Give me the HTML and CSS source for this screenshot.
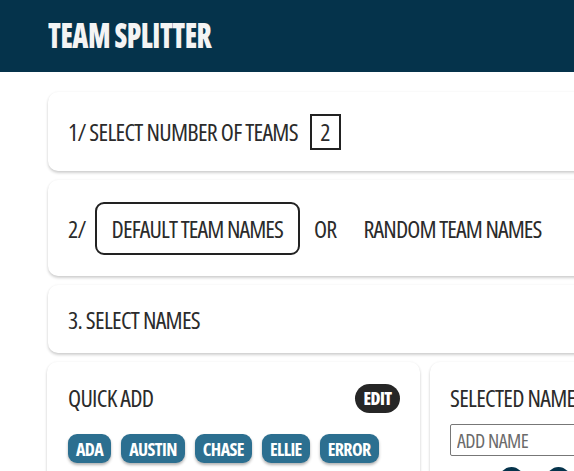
FILE: index.html
```html
<!DOCTYPE html>
<html>
<head>
<meta charset="utf-8">
<link rel="stylesheet" href="styles.css">
</head>
<body>
<header class="topbar">
  <h1 class="brand">TEAM SPLITTER</h1>
</header>
<main class="main">
  <section class="card step step-one">
    <span class="label">1/ SELECT NUMBER OF TEAMS</span>
    <span class="count-box">2</span>
  </section>
  <section class="card step step-two">
    <span class="label">2/</span>
    <button class="option selected">DEFAULT TEAM NAMES</button>
    <span class="label or">OR</span>
    <button class="option">RANDOM TEAM NAMES</button>
  </section>
  <section class="card step step-three">
    <span class="label">3. SELECT NAMES</span>
  </section>
  <div class="columns">
    <section class="card panel quick">
      <div class="panel-head">
        <h2 class="panel-title">QUICK ADD</h2>
        <button class="edit">EDIT</button>
      </div>
      <div class="chips">
        <span class="chip">ADA</span>
        <span class="chip">AUSTIN</span>
        <span class="chip">CHASE</span>
        <span class="chip">ELLIE</span>
        <span class="chip">ERROR</span>
      </div>
    </section>
    <section class="card panel selected-panel">
      <h2 class="panel-title">SELECTED NAMES</h2>
      <input class="name-input" type="text" placeholder="ADD NAME">
      <div class="dots">
        <span class="dot"></span>
        <span class="dot"></span>
      </div>
    </section>
  </div>
</main>
</body>
</html>
```
FILE: styles.css
```css
html, body {
  margin: 0;
  padding: 0;
  overflow: hidden;
  background: #ffffff;
}
body {
  font-family: "Open Sans", "DejaVu Sans", sans-serif;
  font-stretch: 75%;
  color: #2b2b2b;
  width: 800px;
}
.topbar {
  background: #05334b;
  height: 72px;
  display: flex;
  align-items: center;
  padding-left: 48px;
}
.brand {
  margin: 0;
  color: #f4f4f4;
  font-size: 35px;
  font-weight: 800;
  letter-spacing: -0.6px;
  line-height: 1;
  padding-bottom: 3px;
  transform: scaleX(0.8);
  transform-origin: left center;
}
.main {
  padding: 20px 0 0 48px;
  display: flex;
  flex-direction: column;
  gap: 9px;
}
.card {
  background: #fff;
  border-radius: 10px;
  box-shadow: 0 2px 3px rgba(0,0,0,0.18), 0 0 3px rgba(0,0,0,0.05);
}
.step {
  display: flex;
  align-items: center;
  padding: 0 20px;
}
.label {
  font-size: 24px;
  font-weight: 500;
  letter-spacing: -0.7px;
  color: #2b2b2b;
  white-space: nowrap;
}
.step-one {
  height: 79px;
}
.count-box {
  margin-left: 12px;
  width: 27px;
  height: 32px;
  border: 2px solid #222;
  display: flex;
  align-items: center;
  justify-content: center;
  font-size: 24px;
  font-weight: 500;
}
.step-two {
  height: 96px;
}
.option {
  font-family: inherit;
  font-stretch: 75%;
  font-size: 24px;
  font-weight: 500;
  letter-spacing: -0.9px;
  color: #2b2b2b;
  background: #fff;
  border: 2px solid transparent;
  border-radius: 9px;
  height: 53px;
  padding: 0 15px;
  margin-left: 9px;
  white-space: nowrap;
}
.option.selected {
  border-color: #222;
}
.or {
  margin-left: 14px;
}
.option + .or + .option {
  margin-left: 10px;
}
.step-three {
  height: 68px;
}
.columns {
  display: flex;
  gap: 10px;
  margin-left: -1px;
}
.panel {
  padding: 20px 20px 20px 21px;
}
.quick {
  width: 332px;
  flex: none;
}
.selected-panel {
  flex: 1;
  padding-left: 20px;
}
.panel-head {
  display: flex;
  align-items: center;
  justify-content: space-between;
}
.panel-title {
  margin: 0;
  font-size: 24px;
  font-weight: 500;
  letter-spacing: -0.7px;
  line-height: 32px;
  color: #2b2b2b;
  white-space: nowrap;
}
.edit {
  font-family: inherit;
  font-stretch: 75%;
  background: #262626;
  color: #fff;
  border: none;
  border-radius: 15px;
  height: 29px;
  width: 45px;
  padding: 0;
  font-size: 17px;
  font-weight: 800;
  letter-spacing: -0.5px;
}
.chips {
  display: flex;
  gap: 10px;
  margin-top: 20px;
}
.chip {
  background: #2c6f90;
  color: #fff;
  height: 29px;
  padding: 0 8px;
  border-radius: 9px;
  display: flex;
  align-items: center;
  font-size: 18px;
  font-weight: 700;
  letter-spacing: -0.6px;
  box-shadow: 0 2px 3px rgba(0,0,0,0.3);
}
.name-input {
  display: block;
  margin-top: 10px;
  width: 300px;
  height: 32px;
  box-sizing: border-box;
  border: 1px solid #777;
  border-radius: 2px;
  padding: 0 6px;
  font-family: inherit;
  font-stretch: 75%;
  font-size: 20px;
  font-weight: 500;
  letter-spacing: -0.5px;
}
.name-input::placeholder {
  color: #6b6b6b;
}
.dots {
  display: flex;
  gap: 24px;
  margin-top: 11px;
  padding-left: 50px;
}
.dot {
  width: 23px;
  height: 23px;
  border-radius: 50%;
  background: #05334b;
}
```
